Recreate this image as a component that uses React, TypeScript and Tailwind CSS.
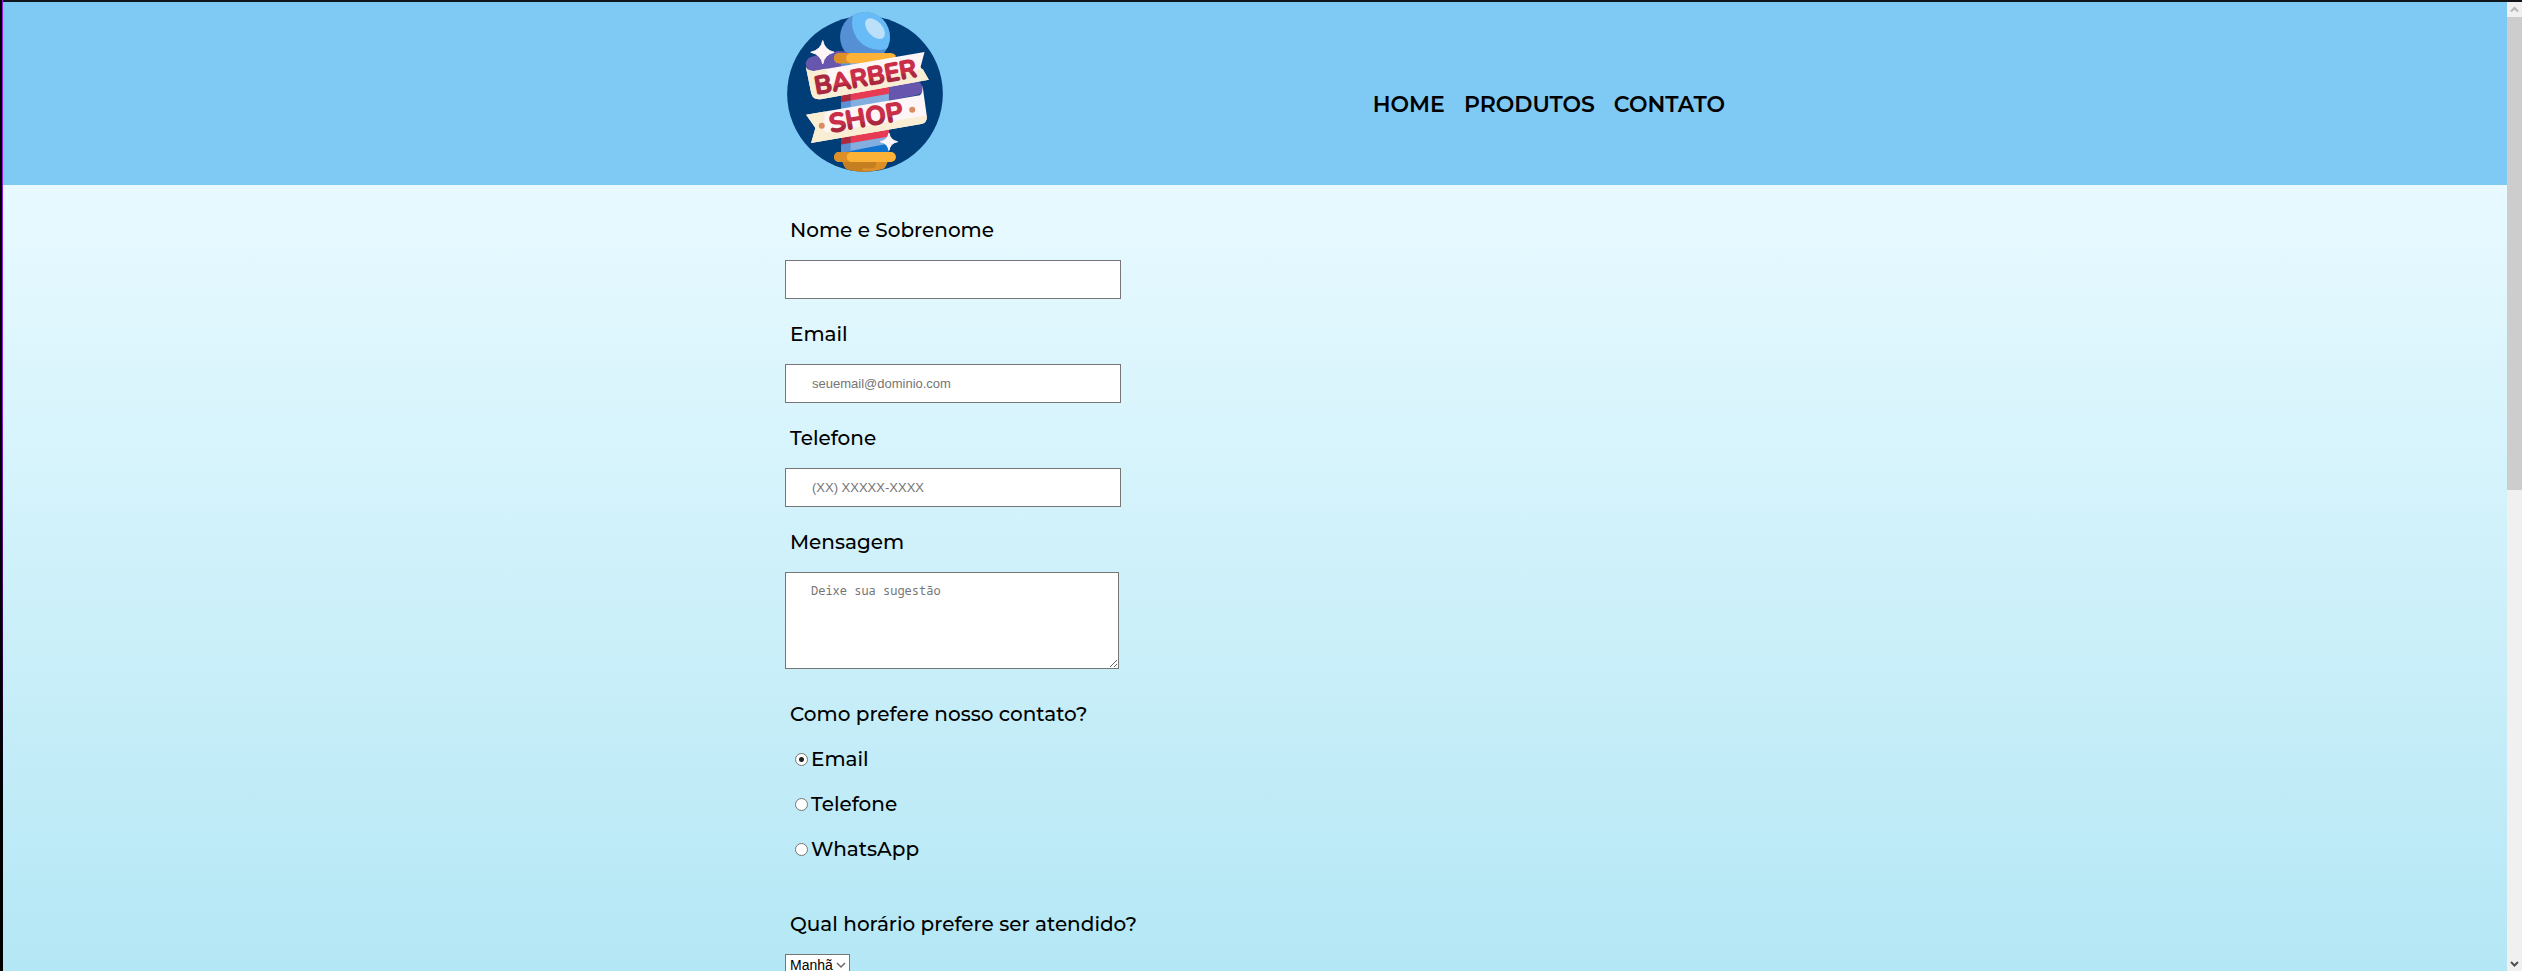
import { useId, type ReactNode } from "react";

const labelText = "text-xl leading-6 font-medium text-black";
const boxed = "block rounded-none border border-[#767676] bg-white outline-none placeholder:text-[#757575] placeholder:opacity-100";
const lineInput = "h-[39px] w-[336px] px-[26px] font-['Liberation_Sans',sans-serif] text-[13px]";

function Logo() {
  return (
    <svg viewBox="45 30 480 490" className="h-[163px] w-[160px]" role="img" aria-label="Barber Shop">
      <defs>
        <clipPath id="ball"><circle cx="285" cy="111" r="75" /></clipPath>
        <clipPath id="pole"><rect x="213" y="180" width="144" height="285" /></clipPath>
        <linearGradient id="ink" gradientUnits="userSpaceOnUse" x1="0" y1="-52" x2="0" y2="0">
          <stop offset=".7" stopColor="#c92e48" />
          <stop offset=".7" stopColor="#ab2740" />
        </linearGradient>
      </defs>
      <circle cx="285" cy="282" r="234" fill="#013d76" />
      <circle cx="285" cy="111" r="75" fill="#5590d5" />
      <circle cx="328" cy="68" r="82" fill="#67bcf8" clipPath="url(#ball)" />
      <ellipse cx="315" cy="86" rx="22" ry="37" transform="rotate(-42 315 86)" fill="#bcdffa" />
      <path d="M132 168L205 153Q225 152 235 160V200L130 214Q107 210 107 190Q108 174 132 168Z" fill="#6656ae" />
      <path d="M345 258L440 243Q460 252 460 270Q458 283 440 286L345 304Z" fill="#6656ae" />
      <g clipPath="url(#pole)">
        <rect x="213" y="180" width="144" height="285" fill="#83aee0" />
        <path d="M213 283L357 258V282L213 307Z" fill="#e63b52" />
        <path d="M213 410L357 385V410L213 435Z" fill="#e63b52" />
        <path d="M213 459L357 431V470H213Z" fill="#1273cc" />
        <path d="M213 180H242V465H213Z" fill="#4e87cf" fillOpacity=".75" />
        <path d="M213 283L242 278V302L213 307ZM213 412L242 407V429L213 434Z" fill="#ae283c" />
      </g>
      <path d="M216 482H354Q350 501 340 508Q285 524 230 508Q220 501 216 482Z" fill="#dc8f27" />
      <path d="M218 484H318V495Q317 504 309 506H278V516Q250 516 230 508Q221 500 218 484Z" fill="#c67f20" />
      <rect x="192" y="457" width="186" height="30" rx="15" fill="#fbb236" />
      <path d="M242 457H207A15 15 0 0 0 207 487H242Q230 482 230 472Q230 462 242 457Z" fill="#dc8f27" />
      <path d="M207 159H362Q372 160 377 166V190H207A15 15 0 0 1 207 159Z" fill="#fbb236" />
      <path d="M242 159H207A15 15 0 0 0 207 190H242Q228 185 228 174Q228 164 242 159Z" fill="#dc8f27" />
      <path d="M107 200Q112 214 132 213L464 156L452 201L477 240L152 298Q128 302 123 279Z" fill="#fef5f6" />
      <path d="M107 200Q112 214 132 213L170 206V236Q170 254 185 253L459 207L477 240L152 298Q128 302 123 279Z" fill="#f9edd3" />
      <path d="M108 345L450 286Q459 281 458 258L471 350Q472 369 454 373L123 430L136 385Z" fill="#fef5f6" />
      <path d="M108 345L165 335L161 386Q162 400 178 397L470 347Q474 369 454 373L123 430L136 385Z" fill="#f9edd3" />
      <g fill="url(#ink)" stroke="url(#ink)" strokeWidth="4" strokeLinejoin="round" fontFamily="Nunito, Inter, sans-serif" fontWeight="700">
        <text transform="translate(138 284) rotate(-10)" fontSize="76"><tspan fill="#ab2740" stroke="#ab2740">B</tspan>ARBER</text>
        <text transform="translate(182 399) rotate(-10)" fontSize="79">SHOP</text>
      </g>
      <circle cx="155" cy="378" r="9" fill="#da8b60" />
      <circle cx="427" cy="330" r="9" fill="#da8b60" />
      <path d="M158 122Q163 150 192 157Q163 164 158 192Q153 164 122 157Q153 150 158 122Z" fill="#fef5f6" stroke="#fef5f6" strokeWidth="3" />
      <path d="M357 400Q361 422 383 426Q361 430 357 452Q353 430 331 426Q353 422 357 400Z" fill="#fef5f6" stroke="#fef5f6" strokeWidth="3" />
    </svg>
  );
}

function Field({ label, children }: { label: string; children: (id: string) => ReactNode }) {
  const id = useId();
  return (
    <div className="flex flex-col items-start gap-[18px]">
      <label htmlFor={id} className={`${labelText} ml-[5px]`}>{label}</label>
      {children(id)}
    </div>
  );
}

function Option({ label, checked }: { label: string; checked?: boolean }) {
  return (
    <label className={`${labelText} flex items-center gap-[3px]`}>
      <input
        type="radio"
        name="contato"
        defaultChecked={checked}
        className="size-[13px] appearance-none rounded-full border border-[#767676] bg-white checked:bg-[radial-gradient(circle,#222_0_2px,#fff_3px)]"
      />
      {label}
    </label>
  );
}

function ScrollRail() {
  return (
    <div className="flex w-[15px] shrink-0 flex-col bg-[#f0f0f0]" aria-hidden="true">
      <svg viewBox="0 0 15 15" className="h-[15px] w-[15px]" fill="none" stroke="#b5b5b5" strokeWidth="2">
        <path d="M4 9.500L7.500 6L11 9.500" />
      </svg>
      <div className="h-[48.8%] bg-[#cdcdcd]" />
      <svg viewBox="0 0 15 15" className="mt-auto h-[15px] w-[15px]" fill="none" stroke="#505050" strokeWidth="2">
        <path d="M4 6L7.500 9.500L11 6" />
      </svg>
    </div>
  );
}

export default function App() {
  return (
    <div className="flex h-screen overflow-hidden border-l-2 border-black font-['Montserrat','Inter',sans-serif]">
      <div className="w-px shrink-0 bg-linear-to-b from-[#8a1fe0] from-40% to-black to-90%" />
      <div className="flex min-w-0 flex-1 border-t-2 border-[#11151c]">
        <div className="flex min-w-0 flex-1 flex-col overflow-hidden">
          <header className="shrink-0 bg-[#7fc9f5]">
            <div className="mx-auto flex w-full max-w-[940px] items-center justify-between pt-2 pb-3">
              <Logo />
              <nav className="mt-[26px]">
                <ul className="flex gap-[19px] text-[22px] leading-7 font-semibold text-black">
                  <li><a href="#home">HOME</a></li>
                  <li><a href="#produtos">PRODUTOS</a></li>
                  <li><a href="#contato">CONTATO</a></li>
                </ul>
              </nav>
            </div>
          </header>
          <main className="min-h-0 flex-1 bg-linear-to-b from-[#e8faff] to-[#b4e7f5]">
            <form className="mx-auto flex w-full max-w-[940px] flex-col gap-[23px] pt-[33px]">
              <Field label="Nome e Sobrenome">
                {(id) => <input id={id} type="text" className={`${boxed} ${lineInput}`} />}
              </Field>
              <Field label="Email">
                {(id) => <input id={id} type="email" placeholder="seuemail@dominio.com" className={`${boxed} ${lineInput}`} />}
              </Field>
              <Field label="Telefone">
                {(id) => <input id={id} type="tel" placeholder="(XX) XXXXX-XXXX" className={`${boxed} ${lineInput}`} />}
              </Field>
              <Field label="Mensagem">
                {(id) => <textarea id={id} placeholder="Deixe sua sugestão" className={`${boxed} h-[97px] w-[334px] resize px-[25px] py-[10px] font-['Noto_Sans_Mono','DejaVu_Sans_Mono',monospace] text-xs leading-4`} />}
              </Field>
              <fieldset className="mt-[10px]">
                <legend className={`${labelText} mb-[21px] ml-[5px]`}>Como prefere nosso contato?</legend>
                <div className="ml-[10px] flex flex-col items-start gap-[21px]">
                  <Option label="Email" checked />
                  <Option label="Telefone" />
                  <Option label="WhatsApp" />
                </div>
              </fieldset>
              <div className="mt-[28px]">
                <Field label="Qual horário prefere ser atendido?">
                  {(id) => (
                    <span className="grid items-center">
                      <select id={id} className="col-start-1 row-start-1 h-[21px] w-[65px] appearance-none border border-[#767676] bg-white pl-1 font-['Liberation_Sans',sans-serif] text-sm leading-4 text-black">
                        <option>Manhã</option>
                        <option>Tarde</option>
                        <option>Noite</option>
                      </select>
                      <svg viewBox="0 0 10 10" className="pointer-events-none col-start-1 row-start-1 mr-1 size-[10px] justify-self-end" fill="none" stroke="#6b6b6b" strokeWidth="1.500">
                        <path d="M1 3L5 7L9 3" />
                      </svg>
                    </span>
                  )}
                </Field>
              </div>
            </form>
          </main>
        </div>
        <ScrollRail />
      </div>
    </div>
  );
}
